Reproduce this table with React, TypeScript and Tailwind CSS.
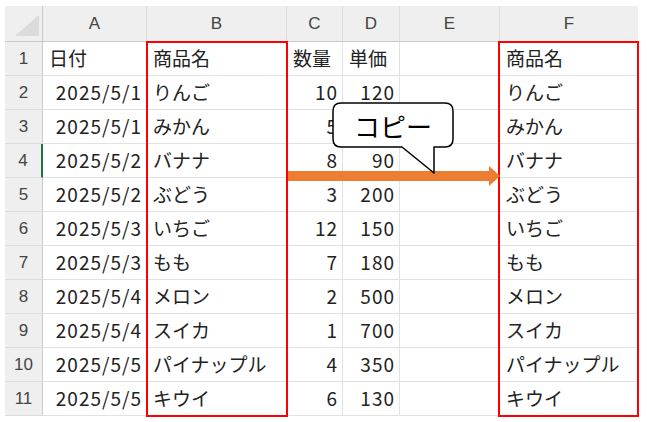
const font = { fontFamily: '"Noto Sans CJK JP", "Noto Sans", sans-serif' };

type Row = [string, string, string, string, string, string];

const rows: Row[] = [
  ["日付", "商品名", "数量", "単価", "", "商品名"],
  ["2025/5/1", "りんご", "10", "120", "", "りんご"],
  ["2025/5/1", "みかん", "5", "", "", "みかん"],
  ["2025/5/2", "バナナ", "8", "90", "", "バナナ"],
  ["2025/5/2", "ぶどう", "3", "200", "", "ぶどう"],
  ["2025/5/3", "いちご", "12", "150", "", "いちご"],
  ["2025/5/3", "もも", "7", "180", "", "もも"],
  ["2025/5/4", "メロン", "2", "500", "", "メロン"],
  ["2025/5/4", "スイカ", "1", "700", "", "スイカ"],
  ["2025/5/5", "パイナップル", "4", "350", "", "パイナップル"],
  ["2025/5/5", "キウイ", "6", "130", "", "キウイ"],
];

const cols = ["A", "B", "C", "D", "E", "F"];

function Cell({ value, right }: { value: string; right: boolean }) {
  return (
    <div
      className={`h-[34px] border-r border-b border-[#e2e2e2] flex items-center text-[19px] text-[#222] whitespace-nowrap overflow-hidden ${
        right ? "justify-end pr-[4px] tracking-[1px]" : "pl-[6px]"
      }`}
    >
      {value}
    </div>
  );
}

export default function App() {
  return (
    <div className="relative w-[647px] h-[422px] bg-white overflow-hidden" style={font}>
      <div className="pl-[5px] pt-[6px]">
        <div className="grid grid-cols-[38px_104px_140px_56px_57px_100px_138px] w-[633px]">
          {/* corner */}
          <div className="relative h-[36px] bg-[#efefef] border-r border-b border-[#c9c9c9]">
            <svg className="absolute left-0 top-0" width="38" height="36">
              <polygon points="10,30 34,30 34,9" fill="#dbdbdb" />
            </svg>
          </div>
          {cols.map((c, i) => (
            <div
              key={c}
              className={`h-[36px] bg-[#efefef] border-b border-[#c9c9c9] flex items-center justify-center text-[17px] text-[#444] ${
                i < cols.length - 1 ? "border-r border-r-[#dcdcdc]" : ""
              }`}
              style={{ fontFamily: '"Liberation Sans", sans-serif' }}
            >
              {c}
            </div>
          ))}

          {rows.map((r, ri) => (
            <div key={ri} className="contents">
              <div
                className={`h-[34px] bg-[#efefef] border-b border-[#dcdcdc] flex items-center justify-center text-[17px] text-[#444] ${
                  ri === 3 ? "border-r-2 border-r-[#217346]" : "border-r border-r-[#c9c9c9]"
                }`}
                style={{ fontFamily: '"Liberation Sans", sans-serif' }}
              >
                {ri + 1}
              </div>
              {r.map((v, ci) => (
                <Cell
                  key={ci}
                  value={v}
                  right={ri > 0 && (ci === 0 || ci === 2 || ci === 3)}
                />
              ))}
            </div>
          ))}
        </div>
      </div>

      {/* red selection frames */}
      <div className="absolute left-[146px] top-[41px] w-[142px] h-[376px] border-2 border-[#ff0000]" />
      <div className="absolute left-[498px] top-[41px] w-[141px] h-[376px] border-2 border-[#ff0000]" />

      {/* arrow + callout */}
      <svg className="absolute left-0 top-0" width="647" height="422">
        <rect x="288" y="171" width="202" height="10" fill="#ed7d31" />
        <polygon points="489,166 500,176 489,186" fill="#ed7d31" />
        <path
          d="M341,103 H445 Q453,103 453,111 V139 Q453,147 445,147 H434 L434,173 L402,147 H341 Q333,147 333,139 V111 Q333,103 341,103 Z"
          fill="#fff"
          stroke="#000"
          strokeWidth="1.5"
          strokeLinejoin="round"
        />
      </svg>
      <div className="absolute left-[333px] top-[103px] w-[120px] h-[44px] flex items-center justify-center text-[26px] text-black">
        コピー
      </div>
    </div>
  );
}
